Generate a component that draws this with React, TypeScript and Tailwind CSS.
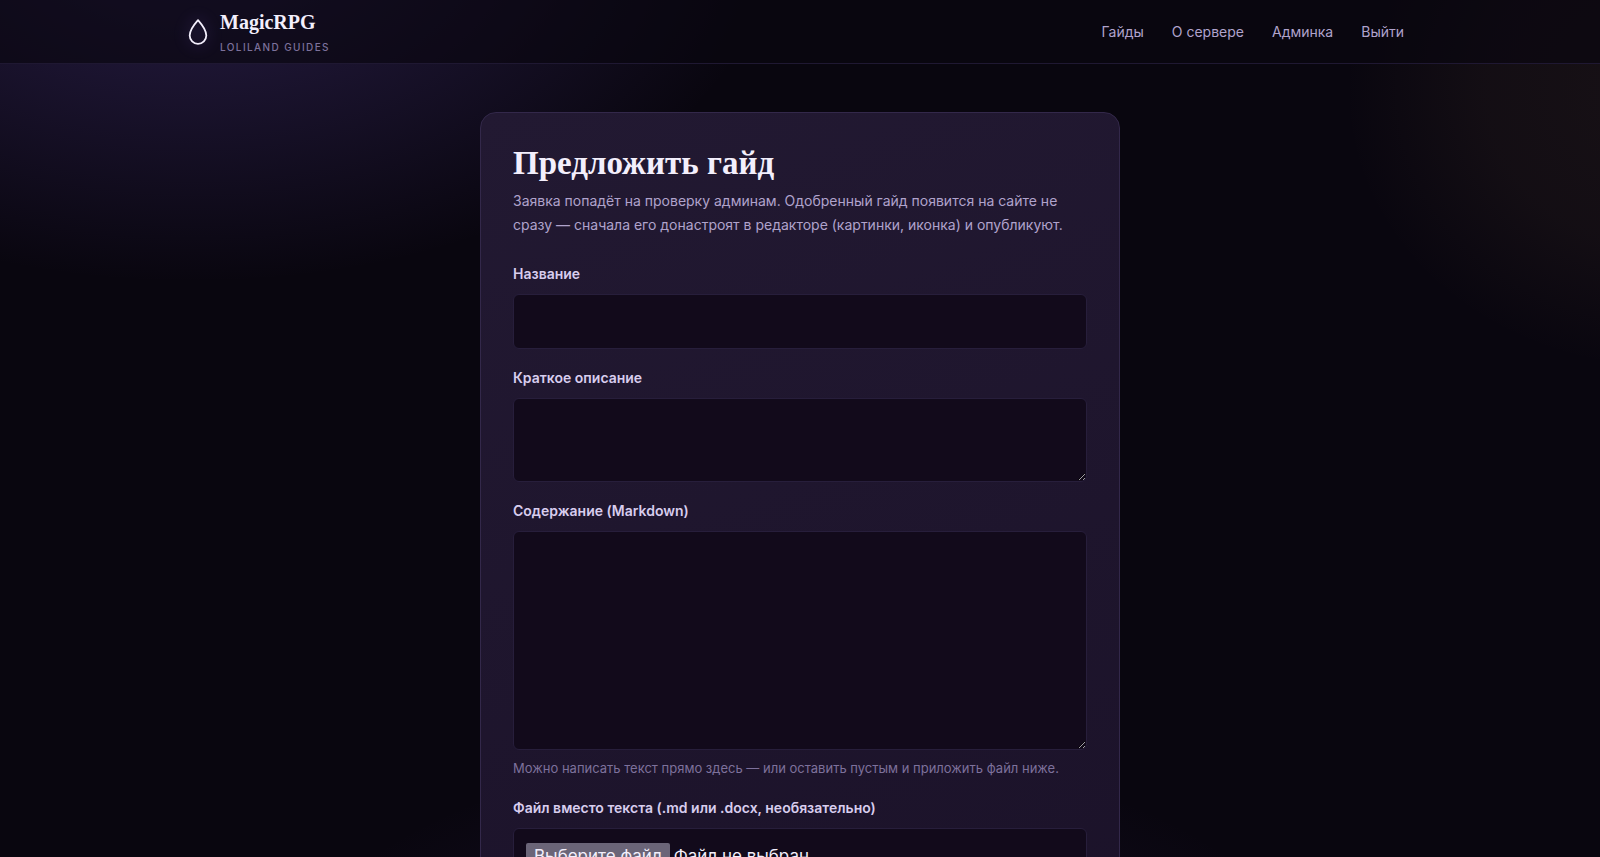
import { useState } from 'react'
import type { ReactNode } from 'react'

const NAV_LINKS = [
  { href: '#guides', label: 'Гайды' },
  { href: '#about', label: 'О сервере' },
  { href: '#admin', label: 'Админка' },
]

const fieldClass =
  'block w-full rounded-md border border-[#271e3b] bg-[#120a1b] px-3 py-3 text-[17px] text-[#f3effc] outline-none focus:border-[#7c5cc4]'

const navClass = 'rounded-md px-3 py-2 text-sm leading-6 text-[#b0a3cc] hover:text-white'

function Logo() {
  return (
    <a href="#home" className="flex items-center gap-2">
      <svg
        className="h-7 w-7 drop-shadow-[0_0_8px_rgba(139,108,240,0.45)]"
        viewBox="0 0 28 28"
        fill="none"
        stroke="#f3effc"
        strokeWidth={1.8}
        strokeLinejoin="round"
      >
        <path d="M14 2.2C14 2.2 5.7 11.5 5.7 17.6a8.3 8.3 0 0 0 16.6 0C22.3 11.5 14 2.2 14 2.2Z" />
      </svg>
      <span className="flex flex-col">
        <span className="font-['Liberation_Serif',serif] text-xl leading-[30px] font-bold text-[#f3effc]">
          MagicRPG
        </span>
        <span className="text-[10px] leading-5 font-medium tracking-[1.4px] text-[#7d719b] uppercase">
          Loliland Guides
        </span>
      </span>
    </a>
  )
}

function Header() {
  return (
    <header className="border-b border-[#1f1832] bg-[#09060f]/65">
      <div className="mx-auto flex h-[63px] max-w-7xl items-center justify-between px-6">
        <Logo />
        <nav className="flex items-center gap-1">
          {NAV_LINKS.map((link) => (
            <a key={link.href} href={link.href} className={navClass}>
              {link.label}
            </a>
          ))}
          <button type="button" className={navClass}>
            Выйти
          </button>
        </nav>
      </div>
    </header>
  )
}

interface FieldProps {
  id: string
  label: string
  hint?: string
  children: ReactNode
}

function Field({ id, label, hint, children }: FieldProps) {
  return (
    <div>
      <label htmlFor={id} className="mb-2 block text-sm leading-[25px] font-semibold text-[#d8cdee]">
        {label}
      </label>
      {children}
      {hint && <p className="mt-2 text-[13px] leading-[21px] text-[#7d719b]">{hint}</p>}
    </div>
  )
}

export default function App() {
  const [fileName, setFileName] = useState('')

  return (
    <div className="min-h-screen bg-[#09060f] bg-[radial-gradient(ellipse_780px_470px_at_12%_-70px,rgba(112,84,200,0.3),transparent_75%),radial-gradient(ellipse_400px_350px_at_104%_90px,rgba(212,160,110,0.07),rgba(212,160,110,0.05)_45%,transparent_80%),radial-gradient(ellipse_700px_340px_at_50%_1000px,rgba(110,80,190,0.14),transparent_75%)] bg-no-repeat font-['Inter',sans-serif]">
      <Header />

      <main className="mx-auto max-w-2xl px-4 py-12">
        <form
          className="rounded-2xl border border-[#33284a] bg-linear-160 from-[#221932] to-[#1b1229] p-8"
          onSubmit={(e) => e.preventDefault()}
        >
          <h1 className="mb-2 font-['Liberation_Serif',serif] text-[33px] leading-9 font-bold text-[#f3effc]">
            Предложить гайд
          </h1>
          <p className="mb-6 text-sm leading-6 text-[#b0a3cc]">
            Заявка попадёт на проверку админам. Одобренный гайд появится на сайте не сразу — сначала его донастроят в
            редакторе (картинки, иконка) и опубликуют.
          </p>

          <div className="flex flex-col gap-4">
            <Field id="title" label="Название">
              <input id="title" type="text" className={`${fieldClass} h-[55px]`} />
            </Field>

            <Field id="summary" label="Краткое описание">
              <textarea id="summary" className={`${fieldClass} h-[84px] resize-y`} />
            </Field>

            <Field
              id="content"
              label="Содержание (Markdown)"
              hint="Можно написать текст прямо здесь — или оставить пустым и приложить файл ниже."
            >
              <textarea id="content" className={`${fieldClass} h-[219px] resize-y`} />
            </Field>

            <Field id="file" label="Файл вместо текста (.md или .docx, необязательно)">
              <input
                id="file"
                type="file"
                accept=".md,.docx"
                className="sr-only"
                onChange={(e) => setFileName(e.target.files?.[0]?.name ?? '')}
              />
              <label htmlFor="file" className={`${fieldClass} flex h-[55px] items-center gap-1`}>
                <span className="rounded-xs bg-[#6b6578] px-2 leading-[26px]">Выберите файл</span>
                <span className="leading-[26px]">{fileName || 'Файл не выбран'}</span>
              </label>
            </Field>

            <button
              type="submit"
              className="mt-2 self-start rounded-md bg-[#7c5cc4] px-6 py-3 text-sm font-semibold text-white hover:bg-[#8b6cd4]"
            >
              Отправить
            </button>
          </div>
        </form>
      </main>
    </div>
  )
}
